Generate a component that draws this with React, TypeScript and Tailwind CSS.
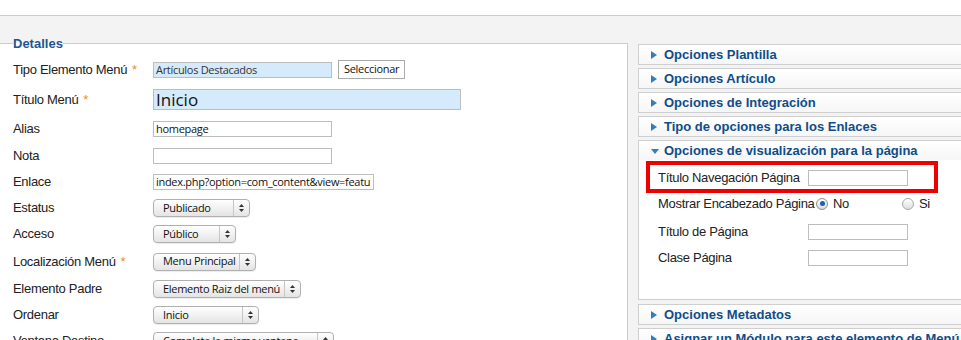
import React from 'react';

const Req = () => <span className="ml-[5px] text-[13px] text-[#f08a24]">*</span>;

function TextInput({ value, className, bg = 'bg-white' }: { value?: string; className: string; bg?: string }) {
  return (
    <div className={`h-[16px] border border-[#bdbdbd] px-[2px] text-[11px] leading-[14px] tracking-[-0.3px] text-[#111] font-['Open_Sans',sans-serif] overflow-hidden whitespace-nowrap ${bg} ${className}`}>
      {value}
    </div>
  );
}

function UpDown() {
  return (
    <svg width="5" height="8" viewBox="0 0 5 8">
      <path d="M2.5 0 L5 3 L0 3 Z" fill="#333" />
      <path d="M2.5 8 L5 5 L0 5 Z" fill="#333" />
    </svg>
  );
}

function Select({ value, className }: { value: string; className: string }) {
  return (
    <div className={`flex h-[18px] items-stretch rounded-[4px] border border-[#b0b0b0] bg-linear-to-b from-white to-[#e4e4e4] shadow-[0_1px_1px_rgba(0,0,0,0.08)] ${className}`}>
      <div className="flex flex-1 items-center overflow-hidden pl-[9px] text-[11px] tracking-[-0.3px] text-[#111] font-['Open_Sans',sans-serif] whitespace-nowrap">{value}</div>
      <div className="flex w-[16px] shrink-0 items-center justify-center border-l border-[#c6c6c6]">
        <UpDown />
      </div>
    </div>
  );
}

function Row({ label, req, h, children }: { label: string; req?: boolean; h: string; children: React.ReactNode }) {
  return (
    <div className={`flex shrink-0 items-center ${h}`}>
      <div className="w-[140px] shrink-0 text-[13px] tracking-[-0.3px] text-[#222]">
        {label}
        {req && <Req />}
      </div>
      <div className="flex items-center gap-[6px]">{children}</div>
    </div>
  );
}

function Arrow({ open }: { open?: boolean }) {
  return open ? (
    <svg width="8" height="6" viewBox="0 0 8 6">
      <path d="M0 1 L8 1 L4 6 Z" fill="#2f7fc0" />
    </svg>
  ) : (
    <svg width="6" height="8" viewBox="0 0 6 8">
      <path d="M0 0 L6 4 L0 8 Z" fill="#2f7fc0" />
    </svg>
  );
}

function PaneHead({ title, open }: { title: string; open?: boolean }) {
  return (
    <div className="flex h-[19px] items-center bg-linear-to-b from-white to-[#f6f6f6] pl-[12px]">
      <div className="flex w-[13px] items-center">
        <Arrow open={open} />
      </div>
      <span className="whitespace-nowrap text-[13px] font-bold text-[#0e4d8a]">{title}</span>
    </div>
  );
}

function Pane({ title }: { title: string }) {
  return (
    <div className="shrink-0 border border-[#cfcfcf]">
      <PaneHead title={title} />
    </div>
  );
}

export default function App() {
  return (
    <div className="h-[340px] w-[961px] overflow-hidden bg-white font-['Liberation_Sans',Arial,sans-serif]">
      <div className="h-[16px] border-b border-[#cccccc] bg-white" />
      <div className="flex h-[324px] items-start bg-[#f3f3f3]">
        {/* Detalles */}
        <fieldset className="mt-[20px] h-[320px] w-[628px] shrink-0 border border-l-0 border-[#cccccc] bg-white pl-[13px]">
          <legend className="px-0 text-[13px] font-bold leading-[15px] text-[#1c5690]">Detalles</legend>
          <div className="flex flex-col pt-[4px]">
            <Row label="Tipo Elemento Menú" req h="h-[29px]">
              <TextInput value="Artículos Destacados" bg="bg-[#d5eafb]" className="w-[179px] text-[#333]" />
              <div className="flex h-[19px] items-center border border-[#aaaaaa] bg-white px-[5px] text-[11px] tracking-[-0.3px] text-[#111] font-['Open_Sans',sans-serif]">Seleccionar</div>
            </Row>
            <Row label="Título Menú" req h="h-[31px]">
              <div className="h-[21px] w-[308px] border border-[#bdbdbd] bg-[#d5eafb] px-[2px] text-[17px] leading-[19px] text-[#111] font-['Open_Sans',sans-serif]">Inicio</div>
            </Row>
            <Row label="Alias" h="h-[28px]">
              <TextInput value="homepage" className="w-[179px]" />
            </Row>
            <Row label="Nota" h="h-[26px]">
              <TextInput className="w-[179px]" />
            </Row>
            <Row label="Enlace" h="h-[26px]">
              <TextInput value="index.php?option=com_content&view=featu" className="w-[221px]" />
            </Row>
            <Row label="Estatus" h="h-[26px]">
              <Select value="Publicado" className="w-[97px]" />
            </Row>
            <Row label="Acceso" h="h-[26px]">
              <Select value="Público" className="w-[83px]" />
            </Row>
            <Row label="Localización Menú" req h="h-[29px]">
              <Select value="Menu Principal" className="w-[103px]" />
            </Row>
            <Row label="Elemento Padre" h="h-[26px]">
              <Select value="Elemento Raiz del menú" className="w-[148px]" />
            </Row>
            <Row label="Ordenar" h="h-[26px]">
              <Select value="Inicio" className="w-[106px]" />
            </Row>
            <Row label="Ventana Destino" h="h-[26px]">
              <Select value="Completa la misma ventana" className="w-[181px]" />
            </Row>
          </div>
        </fieldset>

        {/* Opciones */}
        <div className="ml-[10px] mt-[28px] flex w-[340px] shrink-0 flex-col gap-[3px]">
          <Pane title="Opciones Plantilla" />
          <Pane title="Opciones Artículo" />
          <Pane title="Opciones de Integración" />
          <Pane title="Tipo de opciones para los Enlaces" />
          <div className="mb-[1px] h-[160px] shrink-0 border border-[#cfcfcf] bg-white">
            <PaneHead title="Opciones de visualización para la página" open />
            <div className="relative flex flex-col pl-[19px] pt-[7px] text-[13px] tracking-[-0.3px] text-[#222]">
              <div className="flex h-[21px] items-center">
                <span className="w-[150px] whitespace-nowrap">Título Navegación Página</span>
                <TextInput className="w-[100px]" />
              </div>
              <div className="flex h-[31px] items-center">
                <span className="w-[158px] whitespace-nowrap">Mostrar Encabezado Página</span>
                <span className="mr-[5px] flex h-[12px] w-[12px] items-center justify-center rounded-full border border-[#8e8e8e] bg-linear-to-b from-[#fefefe] to-[#dcdcdc]">
                  <span className="h-[5px] w-[5px] rounded-full bg-[#1f5fa8]" />
                </span>
                <span className="w-[69px]">No</span>
                <span className="mr-[5px] h-[12px] w-[12px] rounded-full border border-[#a8a8a8] bg-linear-to-b from-[#fefefe] to-[#dedede]" />
                <span>Si</span>
              </div>
              <div className="flex h-[25px] items-center">
                <span className="w-[150px]">Título de Página</span>
                <TextInput className="w-[100px]" />
              </div>
              <div className="flex h-[27px] items-center">
                <span className="w-[150px]">Clase Página</span>
                <TextInput className="w-[100px]" />
              </div>
              <div className="pointer-events-none absolute left-[7px] top-[1px] h-[32px] w-[292px] border-[4px] border-[#ee0000]" />
            </div>
          </div>
          <Pane title="Opciones Metadatos" />
          <Pane title="Asignar un Módulo para este elemento de Menú" />
        </div>
      </div>
    </div>
  );
}
